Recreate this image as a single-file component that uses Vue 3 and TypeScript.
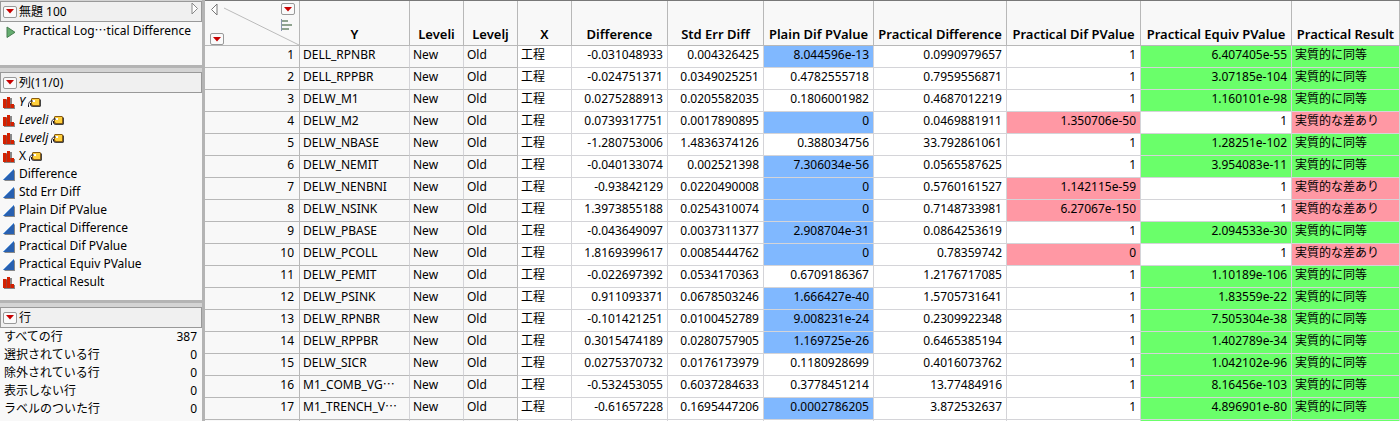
<script setup lang="ts">
type Tone = '' | 'blue' | 'red' | 'green'
interface Column { name: string; width: number; kind: 'nominal' | 'continuous'; italic?: boolean; label?: boolean; side?: boolean }

const columns: Column[] = [
  { name: 'Y', width: 110, kind: 'nominal', italic: true, label: true, side: true },
  { name: 'Leveli', width: 54, kind: 'nominal', italic: true, label: true, side: true },
  { name: 'Levelj', width: 54, kind: 'nominal', italic: true, label: true, side: true },
  { name: 'X', width: 54, kind: 'nominal', label: true },
  { name: 'Difference', width: 96, kind: 'continuous' },
  { name: 'Std Err Diff', width: 96, kind: 'continuous' },
  { name: 'Plain Dif PValue', width: 110, kind: 'continuous' },
  { name: 'Practical Difference', width: 133, kind: 'continuous' },
  { name: 'Practical Dif PValue', width: 134, kind: 'continuous' },
  { name: 'Practical Equiv PValue', width: 151, kind: 'continuous' },
  { name: 'Practical Result', width: 108, kind: 'nominal' },
]

const source: string[][] = [
  ['DELL_RPNBR', '-0.031048933', '0.004326425', '8.044596e-13', '0.0990979657', '1', '6.407405e-55'],
  ['DELL_RPPBR', '-0.024751371', '0.0349025251', '0.4782555718', '0.7959556871', '1', '3.07185e-104'],
  ['DELW_M1', '0.0275288913', '0.0205582035', '0.1806001982', '0.4687012219', '1', '1.160101e-98'],
  ['DELW_M2', '0.0739317751', '0.0017890895', '0', '0.0469881911', '1.350706e-50', '1'],
  ['DELW_NBASE', '-1.280753006', '1.4836374126', '0.388034756', '33.792861061', '1', '1.28251e-102'],
  ['DELW_NEMIT', '-0.040133074', '0.002521398', '7.306034e-56', '0.0565587625', '1', '3.954083e-11'],
  ['DELW_NENBNI', '-0.93842129', '0.0220490008', '0', '0.5760161527', '1.142115e-59', '1'],
  ['DELW_NSINK', '1.3973855188', '0.0254310074', '0', '0.7148733981', '6.27067e-150', '1'],
  ['DELW_PBASE', '-0.043649097', '0.0037311377', '2.908704e-31', '0.0864253619', '1', '2.094533e-30'],
  ['DELW_PCOLL', '1.8169399617', '0.0085444762', '0', '0.78359742', '0', '1'],
  ['DELW_PEMIT', '-0.022697392', '0.0534170363', '0.6709186367', '1.2176717085', '1', '1.10189e-106'],
  ['DELW_PSINK', '0.911093371', '0.0678503246', '1.666427e-40', '1.5705731641', '1', '1.83559e-22'],
  ['DELW_RPNBR', '-0.101421251', '0.0100452789', '9.008231e-24', '0.2309922348', '1', '7.505304e-38'],
  ['DELW_RPPBR', '0.3015474189', '0.0280757905', '1.169725e-26', '0.6465385194', '1', '1.402789e-34'],
  ['DELW_SICR', '0.0275370732', '0.0176173979', '0.1180928699', '0.4016073762', '1', '1.042102e-96'],
  ['M1_COMB_VG…', '-0.532453055', '0.6037284633', '0.3778451214', '13.77484916', '1', '8.16456e-103'],
  ['M1_TRENCH_V…', '-0.61657228', '0.1695447206', '0.0002786205', '3.872532637', '1', '4.896901e-80'],
]

const significant = (v: string): boolean => Number(v) < 0.05

const rows = source.map(([y, diff, se, plain, pdiff, pdif, equiv]) => {
  const same = significant(equiv)
  const texts = [y, 'New', 'Old', '工程', diff, se, plain, pdiff, pdif, equiv, same ? '実質的に同等' : '実質的な差あり']
  return texts.map((text, i) => {
    let tone: Tone = ''
    if (i === 6 && significant(plain)) tone = 'blue'
    if (i === 8 && significant(pdif)) tone = 'red'
    if (i === 9 && same) tone = 'green'
    if (i === 10) tone = same ? 'green' : 'red'
    return { text: text.replace('…', ''), cut: text.endsWith('…'), tone, numeric: columns[i].kind === 'continuous', side: !!columns[i].side }
  })
})

const counts: [string, number][] = [
  ['すべての行', 387],
  ['選択されている行', 0],
  ['除外されている行', 0],
  ['表示しない行', 0],
  ['ラベルのついた行', 0],
]
</script>

<template>
  <div class="window" lang="ja">
    <aside class="sidebar">
      <section class="panel table-panel">
        <header class="bar">
          <button class="menu" aria-label="テーブルメニュー"><svg width="8" height="5" viewBox="0 0 8 5"><path d="M0 0H8L4 4.5Z" fill="#c80000" /></svg></button>
          <h2>無題 100</h2>
          <button class="fold" aria-label="パネルを開く"><svg width="8" height="13" viewBox="0 0 8 13"><path d="M1 1V12L6.500 6.500Z" fill="#fff" stroke="#888" /></svg></button>
        </header>
        <div class="script">
          <button class="fold" aria-label="実行"><svg width="10" height="14" viewBox="0 0 10 14"><path d="M1 3V13.500L9 8.300Z" fill="#65ad70" stroke="#477d50" /></svg></button>
          <span>Practical Log<span class="dots">…</span>tical Difference</span>
        </div>
      </section>

      <section class="panel column-panel">
        <header class="bar">
          <button class="menu" aria-label="列メニュー"><svg width="8" height="5" viewBox="0 0 8 5"><path d="M0 0H8L4 4.5Z" fill="#c80000" /></svg></button>
          <h2>列(11/0)</h2>
        </header>
        <ul>
          <li v-for="c in columns" :key="c.name">
            <svg v-if="c.kind === 'nominal'" class="kind" width="13" height="14" viewBox="0 0 13 14">
              <path d="M1 4h4V3h4v7h3v4H1Z" fill="#888" />
              <path d="M0 4h3v9H0ZM4 2h3v11H4ZM8 9h3v4H8Z" fill="#d42000" />
              <path d="M3 5h1v8H3ZM7 9h1v4H7Z" fill="#a04030" />
            </svg>
            <svg v-else class="kind" width="13" height="14" viewBox="0 0 13 14">
              <path d="M12 3V14H1Z" fill="#888" />
              <path d="M11 2V13H0Z" fill="#2860b0" />
              <path d="M11 2L0 13" stroke="#68a0e0" />
            </svg>
            <span :class="{ italic: c.italic }">{{ c.name }}</span>
            <svg v-if="c.label" class="tag" width="13" height="12" viewBox="0 0 13 12">
              <path d="M5 3H12L13 4V10L12 11H5L3 9V5Z" fill="#444" />
              <path d="M4 2H11L12 3V9L11 10H4L3 9V3Z" fill="#8a5c10" />
              <path d="M4 3H11V9H5L4 8Z" fill="#ffd03c" />
              <path d="M4 4h3v2H4Z" fill="#fff" />
              <path d="M5 5.500C3 3.500 1 6 .500 8.500V11M2.500 7v2l2 2" fill="none" stroke="#112" />
            </svg>
          </li>
        </ul>
      </section>

      <section class="panel row-panel">
        <header class="bar">
          <button class="menu" aria-label="行メニュー"><svg width="8" height="5" viewBox="0 0 8 5"><path d="M0 0H8L4 4.5Z" fill="#c80000" /></svg></button>
          <h2>行</h2>
        </header>
        <dl>
          <div v-for="[name, n] in counts" :key="name"><dt>{{ name }}</dt><dd>{{ n }}</dd></div>
        </dl>
      </section>
    </aside>

    <main class="grid">
      <table>
        <colgroup>
          <col class="index-col" />
          <col v-for="c in columns" :key="c.name" :style="{ width: c.width + 'px' }" />
        </colgroup>
        <thead>
          <tr>
            <td class="corner">
              <div class="corner-box">
                <svg class="diagonal" viewBox="0 0 94 44" preserveAspectRatio="none"><path d="M19 7L94 44" stroke="#bbb" /></svg>
                <div class="corner-left">
                  <button class="fold" aria-label="サイドバーを閉じる"><svg width="8" height="13" viewBox="0 0 8 13"><path d="M7 1V12L1.500 6.500Z" fill="#fff" stroke="#777" /></svg></button>
                  <button class="menu" aria-label="行の操作"><svg width="8" height="5" viewBox="0 0 8 5"><path d="M0 0H8L4 4.5Z" fill="#c80000" /></svg></button>
                </div>
                <div class="corner-right">
                  <button class="menu" aria-label="列の操作"><svg width="8" height="5" viewBox="0 0 8 5"><path d="M0 0H8L4 4.5Z" fill="#c80000" /></svg></button>
                  <svg width="11" height="12" viewBox="0 0 11 12"><path d="M0 0H1V12H0Z" fill="#8a96ae" /><path d="M1 1h6v2H1ZM1 5h10v2H1ZM1 9h7v2H1Z" fill="#8fa38f" /></svg>
                </div>
              </div>
            </td>
            <th v-for="c in columns" :key="c.name" scope="col">{{ c.name }}</th>
          </tr>
        </thead>
        <tbody>
          <tr v-for="(row, r) in rows" :key="r">
            <th class="index" scope="row">{{ r + 1 }}</th>
            <td v-for="(cell, i) in row" :key="i" :class="[cell.tone, { numeric: cell.numeric, side: cell.side, last: i === 2 }]">{{ cell.text }}<span v-if="cell.cut" class="dots">…</span></td>
          </tr>
          <tr aria-hidden="true">
            <td class="index"></td>
            <td v-for="(c, i) in columns" :key="c.name" :class="{ side: c.side, last: i === 2, green: i > 8 }"></td>
          </tr>
        </tbody>
      </table>
    </main>
  </div>
</template>

<style>
html, body { margin: 0; }
body { overflow: hidden; }
</style>

<style scoped>
.window { display: flex; height: 100vh; overflow: hidden; font: 12px/18px "Noto Sans", "Noto Sans CJK JP", sans-serif; color: #000; background: #fff; }
h2, ul, dl, dd { margin: 0; padding: 0; }
h2 { font-size: 12px; font-weight: 400; line-height: 18px; }
button { padding: 0; font: inherit; }
svg { display: block; flex: none; }
.dots { font-family: "Noto Sans CJK JP", sans-serif; line-height: 1; }

.sidebar { flex: none; display: flex; flex-direction: column; gap: 3px; width: 202px; background: #b4b4b4; border-right: 3px solid #b4b4b4; overflow: hidden; }
.panel { flex: none; background: #f8f8f8; border-top: 4px solid #d4d4d4; }
.table-panel { height: 64px; border-top-width: 1px; }
.column-panel { height: 228px; }
.row-panel { flex: 1; }
.bar { display: flex; align-items: center; gap: 2px; height: 19px; padding: 0 2px; border: 1px solid #999; background: #f0f0f0; }
.bar .fold { margin: -6px 0 0 auto; }
.menu { display: grid; place-items: center; box-sizing: border-box; width: 14px; height: 12px; flex: none; border: 1px solid #999; border-radius: 2px; background: #fafafa; }
.fold { flex: none; border: 0; background: none; }
.script { display: flex; align-items: center; gap: 7px; height: 18px; padding-left: 6px; white-space: nowrap; }

ul { list-style: none; }
li { display: flex; align-items: center; height: 18px; padding-left: 3px; white-space: nowrap; }
.kind { margin-right: 3px; }
.tag { margin-left: 3px; }
.italic { font-style: italic; }
dl div { display: flex; justify-content: space-between; height: 18px; padding: 0 5px 0 4px; }

.grid { flex: 1; min-width: 0; overflow: hidden; border-top: 1px solid #787878; }
table { width: 100%; table-layout: fixed; border-collapse: separate; border-spacing: 0; }
.index-col { width: 95px; }
th, td { box-sizing: border-box; height: 22px; padding: 0 4px 3px 3px; border-right: 1px solid #d4d4d8; border-bottom: 1px solid #d4d4d8; white-space: nowrap; overflow: hidden; text-align: left; }
thead th, .corner { height: 45px; background: #f8f8f8; border-color: #b8b8b8; }
thead th { padding: 0 0 2px; text-align: center; vertical-align: bottom; font-size: 13px; font-weight: 600; }
.corner { padding: 0; }
.corner-box { position: relative; display: flex; justify-content: space-between; height: 44px; }
.diagonal { position: absolute; inset: 0; width: 100%; height: 100%; }
.corner-left, .corner-right { position: relative; display: flex; flex-direction: column; padding: 2px 4px 0 5px; }
.corner-left { justify-content: space-between; }
.corner-left .fold { align-self: flex-start; }
.corner-right { gap: 4px; }
.index { padding-right: 5px; text-align: right; font-weight: 400; background: #f8f8f8; border-color: #b8b8b8; }
.side { background: #f8f8f8; border-bottom-color: #b8b8b8; }
.last { border-right-color: #b8b8b8; }
.numeric { text-align: right; }
.blue { background: #80b8ff; }
.red { background: #ff98a4; }
.green { background: #6aff6a; }
</style>
